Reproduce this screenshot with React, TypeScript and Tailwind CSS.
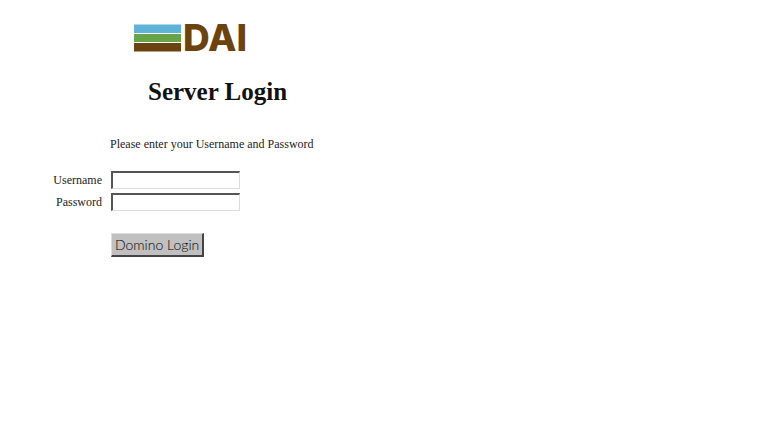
import * as React from 'react';

interface FieldProps {
  id: string;
  label: string;
  type: string;
}

function Logo() {
  return (
    <div className="ml-[134px] flex h-7 items-center gap-0.5" role="img" aria-label="DAI">
      <svg className="h-7 w-[47px]" viewBox="0 0 47 28" aria-hidden="true">
        <rect x="0" y="0.5" width="47" height="8.5" fill="#5fb2d8" />
        <rect x="0" y="10" width="47" height="8" fill="#68a54a" />
        <rect x="0" y="19" width="47" height="8.5" fill="#6b430f" />
      </svg>
      <span className="font-['Inter',sans-serif] text-[37px] leading-7 font-extrabold text-[#6b430f]">DAI</span>
    </div>
  );
}

function Field({ id, label, type }: FieldProps) {
  return (
    <div className="flex h-[18px] items-center gap-[9px]">
      <label htmlFor={id} className="w-[102px] text-right">
        {label}
      </label>
      <input
        id={id}
        name={id}
        type={type}
        className="h-[18px] w-[129px] border-t-2 border-r border-b border-l-2 border-t-[#555] border-r-[#ddd] border-b-[#ddd] border-l-[#555] bg-white px-1 outline-none"
      />
    </div>
  );
}

export default function App() {
  const handleSubmit = (e: React.FormEvent) => {
    e.preventDefault();
  };

  return (
    <main className="min-h-screen bg-white pt-6 font-['Liberation_Serif',serif] text-xs leading-4 text-[#222]">
      <Logo />
      <h1 className="mt-6 ml-[148px] text-[25px] leading-8 font-bold text-[#111]">Server Login</h1>

      <form onSubmit={handleSubmit} className="mt-7">
        <p className="ml-[110px]">Please enter your Username and Password</p>

        {/* Credentials */}
        <div className="mt-[19px] flex flex-col gap-1">
          <Field id="username" label="Username" type="text" />
          <Field id="password" label="Password" type="password" />
        </div>

        <button
          type="submit"
          className="mt-[22px] ml-[111px] h-6 border-t border-r-2 border-b-2 border-l border-t-[#ddd] border-r-[#444] border-b-[#444] border-l-[#ddd] bg-[#c0c0c0] px-[3px] font-['Lato',sans-serif] text-sm leading-5 font-light text-black"
        >
          Domino Login
        </button>
      </form>
    </main>
  );
}
